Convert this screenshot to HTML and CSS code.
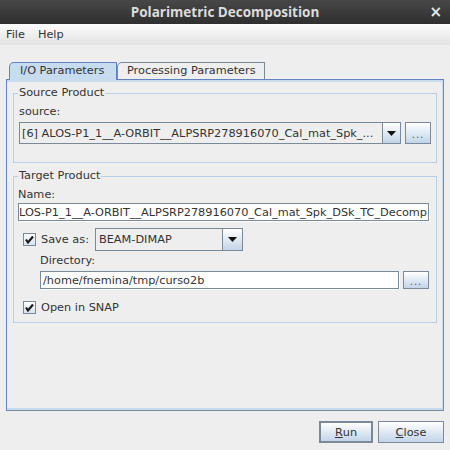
FILE: index.html
```html
<!DOCTYPE html>
<html>
<head>
<meta charset="utf-8">
<link rel="stylesheet" href="styles.css">
</head>
<body>
<div class="window">
  <div class="titlebar">
    <span></span>
    <span class="title">Polarimetric Decomposition</span>
    <span class="close">×</span>
  </div>
  <div class="menubar"><span>File</span><span>Help</span></div>
  <div class="main">
    <div class="tabs">
      <div class="tab selected">I/O Parameters</div>
      <div class="tab">Processing Parameters</div>
    </div>
    <div class="panel">
      <fieldset class="group source">
        <legend>Source Product</legend>
        <div class="label">source:</div>
        <div class="row src-row">
          <div class="combo grow">
            <div class="combo-text">[6] ALOS-P1_1__A-ORBIT__ALPSRP278916070_Cal_mat_Spk_...</div>
            <div class="arrow-btn"><svg width="9" height="5" viewBox="0 0 9 5"><polygon points="0,0 9,0 4.5,5" fill="#111"/></svg></div>
          </div>
          <div class="dots-btn">...</div>
        </div>
      </fieldset>
      <fieldset class="group target">
        <legend>Target Product</legend>
        <div class="label">Name:</div>
        <div class="textfield name-field"><span>ALOS-P1_1__A-ORBIT__ALPSRP278916070_Cal_mat_Spk_DSk_TC_Decomp</span></div>
        <div class="row save-row">
          <div class="check"><svg width="11" height="11" viewBox="0 0 11 11"><path d="M2 5.5 L4 8.5 L9 2.5" fill="none" stroke="#1a1a1a" stroke-width="2.2"/></svg></div>
          <span class="check-label">Save as:</span>
          <div class="combo format">
            <div class="combo-text">BEAM-DIMAP</div>
            <div class="arrow-btn"><svg width="9" height="5" viewBox="0 0 9 5"><polygon points="0,0 9,0 4.5,5" fill="#111"/></svg></div>
          </div>
        </div>
        <div class="label indent">Directory:</div>
        <div class="row dir-row">
          <div class="textfield grow dir-field"><span>/home/fnemina/tmp/curso2b</span></div>
          <div class="dots-btn">...</div>
        </div>
        <div class="row open-row">
          <div class="check"><svg width="11" height="11" viewBox="0 0 11 11"><path d="M2 5.5 L4 8.5 L9 2.5" fill="none" stroke="#1a1a1a" stroke-width="2.2"/></svg></div>
          <span class="check-label">Open in SNAP</span>
        </div>
      </fieldset>
    </div>
    <div class="buttons">
      <div class="btn default run"><span class="u">R</span>un</div>
      <div class="btn close-btn"><span class="u">C</span>lose</div>
    </div>
  </div>
</div>
</body>
</html>
```

FILE: styles.css
```css
* { box-sizing: border-box; }
body {
  margin: 0;
  background: #eeeeee;
  font-family: "DejaVu Sans", sans-serif;
  font-size: 11.3px;
  color: #333333;
}
.window {
  width: 450px;
  height: 450px;
  display: flex;
  flex-direction: column;
  overflow: hidden;
}
.titlebar {
  height: 24px;
  flex: none;
  background: linear-gradient(#474747, #2f2f2f);
  display: grid;
  grid-template-columns: 1fr auto 1fr;
  align-items: center;
  color: #dcdcdc;
}
.title {
  font-family: "Open Sans", sans-serif;
  font-weight: bold;
  font-size: 13.5px;
}
.close {
  justify-self: end;
  padding-right: 8px;
  font-family: "DejaVu Sans", sans-serif;
  font-weight: bold;
  font-size: 15px;
  color: #e6e6e6;
}
.menubar {
  height: 21px;
  flex: none;
  background: linear-gradient(#fcfcfc, #e2e2e2);
  display: flex;
  align-items: center;
  gap: 13px;
  padding-left: 6px;
}
.main {
  flex: 1;
  display: flex;
  flex-direction: column;
  padding: 17px 6px 0 6px;
}
.tabs {
  display: flex;
  height: 17px;
  padding-left: 3px;
  position: relative;
  z-index: 1;
}
.tab {
  height: 17px;
  border: 1px solid #7a8a99;
  border-bottom: none;
  border-top-left-radius: 5px;
  padding: 0 8px 0 9px;
  line-height: 15px;
  background: #eeeeee;
}
.tab.selected {
  height: 18px;
  background: #c8dcf0;
  border-color: #6382bf;
  width: 108px;
  padding-left: 10px;
}
.panel {
  height: 332px;
  flex: none;
  border: 1px solid;
  border-color: #6382bf #7a8a99 #7a8a99 #6382bf;
  box-shadow: inset 0 2px 0 #c8dcf0, inset 0 -2px 0 #c8dcf0, inset -1px 0 0 #c8dcf0;
  padding: 6px 6px 0 6px;
}
.group {
  margin: 0;
  border: 1px solid #b8cfe5;
  padding: 5px 5px 0 5px;
  min-width: 0;
}
.group legend {
  padding: 0 1px;
  margin-left: -1px;
  line-height: 14px;
}
.source { padding-bottom: 18px; }
.target { margin-top: 6px; padding-bottom: 8px; padding-left: 4px; padding-right: 7px; }
.target legend { margin-left: 0; }
.label { line-height: 14px; }
.label.indent { margin-left: 22px; margin-top: 3px; }
.row { display: flex; align-items: center; }
.grow { flex: 1; min-width: 0; }
.src-row { margin-top: 3px; height: 22px; gap: 4px; }
.combo {
  display: flex;
  height: 100%;
  border: 1px solid #7a8a99;
  background: #eeeeee;
}
.combo-text {
  flex: 1;
  min-width: 0;
  white-space: nowrap;
  overflow: hidden;
  padding-left: 2px;
  display: flex;
  align-items: center;
}
.arrow-btn {
  width: 18px;
  flex: none;
  border-left: 1px solid #7a8a99;
  background: linear-gradient(#ffffff, #dce7f2 55%, #c3d5e9);
  display: flex;
  align-items: center;
  justify-content: center;
}
.dots-btn {
  width: 26px;
  height: 100%;
  flex: none;
  border: 1px solid #7a8a99;
  background: linear-gradient(#ffffff, #dce7f2 55%, #c3d5e9);
  display: flex;
  align-items: center;
  justify-content: center;
  color: #5a4f80;
  font-size: 10px;
  letter-spacing: 1px;
  padding-top: 2px;
}
.textfield {
  background: #ffffff;
  border: 1px solid #7a8a99;
  box-shadow: 1px 1px 0 #ffffff;
  display: flex;
  align-items: center;
  white-space: nowrap;
  overflow: hidden;
}
.name-field {
  margin-top: 1px;
  height: 18px;
  justify-content: flex-end;
  padding-right: 1px;
}
.name-field span { flex: none; }
.dir-field { height: 100%; padding-left: 2px; }
.save-row { margin-top: 7px; height: 23px; padding-left: 5px; }
.check {
  width: 13px;
  height: 13px;
  flex: none;
  border: 1px solid #7a8a99;
  background: linear-gradient(#ffffff, #d6e2ef);
  display: flex;
  align-items: center;
  justify-content: center;
}
.check-label { margin-left: 5px; }
.format {
  width: 148px;
  margin-left: 6px;
}
.format .combo-text { padding-left: 3px; }
.format .arrow-btn { width: 20px; }
.dir-row { margin-top: 3px; height: 18px; margin-left: 22px; gap: 4px; }
.open-row { margin-top: 11px; height: 14px; padding-left: 5px; }
.buttons {
  display: flex;
  justify-content: flex-end;
  gap: 5px;
  margin-top: 10px;
}
.btn {
  height: 22px;
  border: 1px solid #7a8a99;
  background: linear-gradient(#ffffff, #dce7f2 55%, #c3d5e9);
  display: flex;
  align-items: center;
  justify-content: center;
}
.btn.default { border-width: 2px; width: 54px; }
.close-btn { width: 66px; }
.u { text-decoration: underline; }
```
